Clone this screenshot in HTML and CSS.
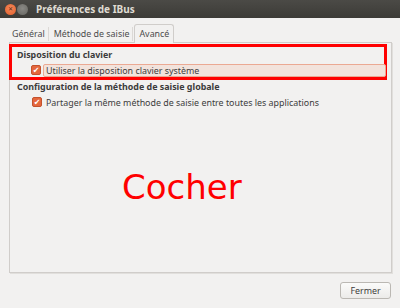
FILE: index.html
```html
<!DOCTYPE html>
<html>
	<head>
		<meta charset="UTF-8">
		<title>Préférences de IBus</title>
		<link rel="stylesheet" href="styles.css">
	</head>
	<body>
		<div id="win">
			<div id="titlebar">
				<span class="wbtn close">&#x2715;</span>
				<span class="wbtn min"></span>
				<span id="title">Préférences de IBus</span>
			</div>
			<div id="tabs">
				<span class="tab">Général</span>
				<span class="tab">Méthode de saisie</span>
				<span class="tab active">Avancé</span>
			</div>
			<div id="page">
				<div class="hl">
					<div class="head">Disposition du clavier</div>
					<div class="row"><span class="chk">&#x2714;</span><span class="lbl focus">Utiliser la disposition clavier système</span></div>
				</div>
				<div class="head">Configuration de la méthode de saisie globale</div>
				<div class="row"><span class="chk">&#x2714;</span><span class="lbl">Partager la même méthode de saisie entre toutes les applications</span></div>
				<div id="note">Cocher</div>
			</div>
			<div id="foot">
				<a href="javascript:;" id="close">Fermer</a>
			</div>
		</div>
	</body>
</html>
```
FILE: styles.css
```css
body{
	margin: 0;
	background: #f2f1f0;
	font-family: "Noto Sans", "DejaVu Sans", sans-serif;
	font-size: 8.9px;
	color: #3c3c3c;
}
#win{
	width: 400px;
	height: 308px;
	display: flex;
	flex-direction: column;
}
#titlebar{
	height: 18px;
	background: linear-gradient(#4b4a46, #3c3b37);
	display: flex;
	align-items: center;
	padding-left: 5px;
	flex: none;
}
.wbtn{
	width: 11px;
	height: 11px;
	border-radius: 50%;
	margin-right: 1px;
	display: inline-flex;
	align-items: center;
	justify-content: center;
	font-size: 6px;
	color: #5a2a14;
}
.close{
	background: radial-gradient(circle at 50% 40%, #f58a5c, #e15d29);
}
.min{
	background: radial-gradient(circle at 50% 40%, #8a8985, #666560);
}
#title{
	margin-left: 7px;
	color: #dfdbd2;
	font-weight: bold;
	font-size: 10px;
}
#tabs{
	display: flex;
	padding: 0 0 0 9px;
	height: 24px;
	align-items: flex-end;
	flex: none;
}
.tab{
	height: 17px;
	line-height: 17px;
	padding: 0 4px 0 3px;
	color: #4c4c4c;
	position: relative;
}
.tab + .tab{
	padding-left: 5px;
}
.tab::after{
	content: "";
	position: absolute;
	right: 0;
	top: 2px;
	bottom: 1px;
	border-right: 1px solid #dcd9d6;
}
.tab.active{
	border: 1px solid #d0cdca;
	border-bottom: none;
	border-radius: 3px 3px 0 0;
	background: #f2f1f0;
	padding: 0 4px;
	margin-left: 1px;
	height: 18px;
	margin-bottom: -1px;
}
.tab.active::after{
	display: none;
}
#page{
	margin: 0 8px 0 9px;
	height: 231px;
	border: 1px solid #d0cdca;
	box-shadow: 1px 1px 0 #e1dfdc;
	padding: 1px 0 0 0;
	box-sizing: border-box;
	display: flex;
	flex-direction: column;
	flex: none;
}
.hl{
	border: 3px solid #ff0000;
	margin: 0 4px 0 -1px;
	padding: 0 0 0 5px;
}
.head{
	font-weight: bold;
	height: 14px;
	line-height: 14px;
	padding-left: 7px;
}
.hl .head{
	padding-left: 0;
	height: 15px;
	line-height: 15px;
}
.row{
	height: 14px;
	display: flex;
	align-items: center;
	padding-left: 22px;
	margin: 1px 0;
}
.hl .row{
	padding-left: 14px;
	margin: 1px 0 0;
}
.chk{
	width: 10px;
	height: 10px;
	border-radius: 2px;
	background: #e4673d;
	border: 1px solid #c4522d;
	color: #fff;
	font-size: 8px;
	line-height: 8px;
	text-align: center;
	margin-right: 2px;
	box-sizing: border-box;
	flex: none;
}
.lbl{
	padding: 0 2px;
	height: 13px;
	line-height: 13px;
	white-space: nowrap;
}
.focus{
	flex: 1;
	background: #f2e3dc;
	border: 1px solid #eba993;
	border-radius: 2px;
	height: 11px;
	line-height: 11px;
	margin-right: -2px;
}
#note{
	color: #ff0000;
	font-family: "DejaVu Sans", sans-serif;
	font-size: 34px;
	padding-left: 112px;
	margin-top: 57px;
}
#foot{
	display: flex;
	justify-content: flex-end;
	padding: 9px 9px 0;
}
#close{
	display: block;
	text-decoration: none;
	width: 51px;
	height: 17px;
	line-height: 16px;
	text-align: center;
	border: 1px solid #bbb8b3;
	border-radius: 3px;
	background: linear-gradient(#fbfbfa, #ecebe9);
	color: #3c3c3c;
	box-sizing: border-box;
}
```
